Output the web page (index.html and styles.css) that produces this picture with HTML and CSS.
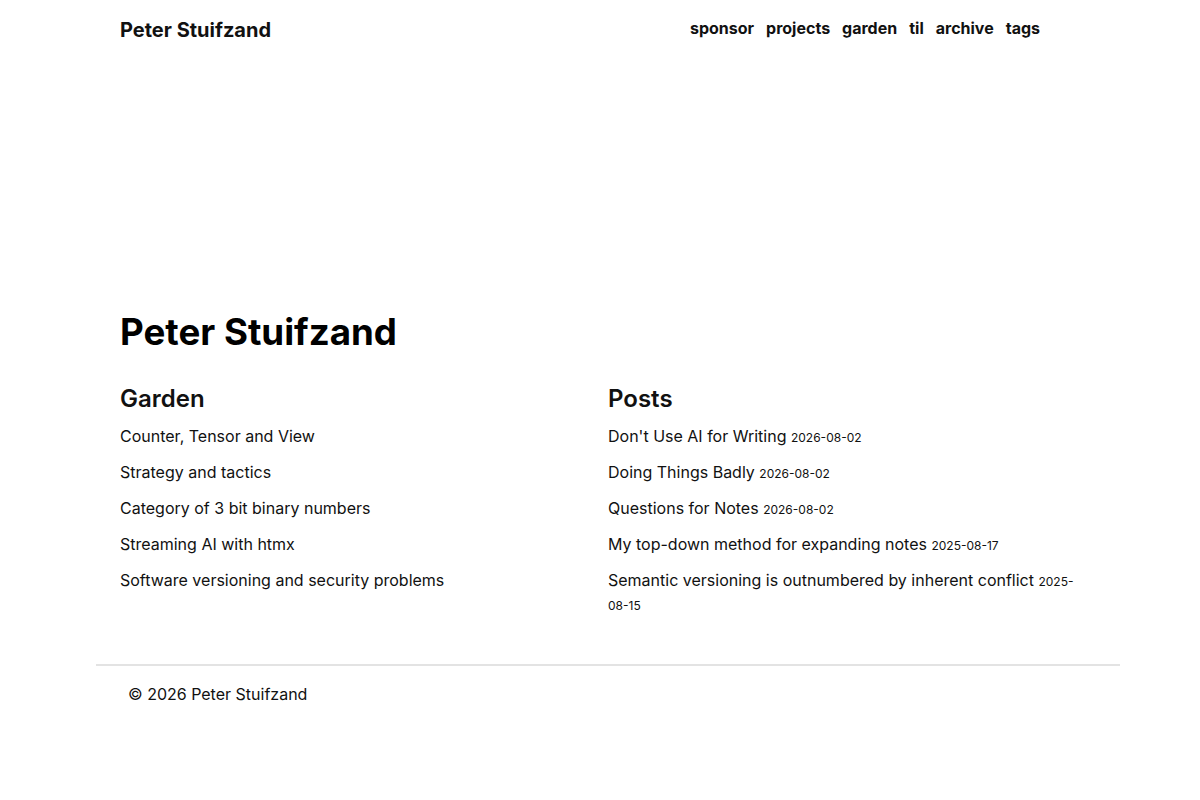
FILE: index.html
```html
<!DOCTYPE html>
<html lang="en">
<head>
<meta charset="utf-8">
<title>Peter Stuifzand</title>
<link rel="stylesheet" href="styles.css">
</head>
<body>
<header class="site-header">
  <a class="site-title" href="#">Peter Stuifzand</a>
  <nav class="site-nav">
    <a href="#">sponsor</a>
    <a href="#">projects</a>
    <a href="#">garden</a>
    <a href="#">til</a>
    <a href="#">archive</a>
    <a href="#">tags</a>
  </nav>
</header>
<main class="content">
  <h1 class="page-title">Peter Stuifzand</h1>
  <div class="columns">
    <section class="column">
      <h2 class="column-title">Garden</h2>
      <ul class="entries">
        <li><a href="#">Counter, Tensor and View</a></li>
        <li><a href="#">Strategy and tactics</a></li>
        <li><a href="#">Category of 3 bit binary numbers</a></li>
        <li><a href="#">Streaming AI with htmx</a></li>
        <li><a href="#">Software versioning and security problems</a></li>
      </ul>
    </section>
    <section class="column">
      <h2 class="column-title">Posts</h2>
      <ul class="entries">
        <li><a href="#">Don't Use AI for Writing</a> <time class="date">2026-08-02</time></li>
        <li><a href="#">Doing Things Badly</a> <time class="date">2026-08-02</time></li>
        <li><a href="#">Questions for Notes</a> <time class="date">2026-08-02</time></li>
        <li><a href="#">My top-down method for expanding notes</a> <time class="date">2025-08-17</time></li>
        <li><a href="#">Semantic versioning is outnumbered by inherent conflict</a> <time class="date">2025-08-15</time></li>
      </ul>
    </section>
  </div>
</main>
<footer class="site-footer">
  <p class="copyright">© 2026 Peter Stuifzand</p>
</footer>
</body>
</html>
```
FILE: styles.css
```css
* { box-sizing: border-box; }
html, body { margin: 0; padding: 0; }
body {
  font-family: Inter, "Noto Sans", "Liberation Sans", sans-serif;
  font-size: 16px;
  line-height: 24px;
  color: #111;
  background: #fff;
}
a { color: inherit; text-decoration: none; }

.site-header {
  width: 960px;
  margin: 0 auto;
  display: flex;
  justify-content: space-between;
  align-items: flex-start;
  padding-top: 15px;
}
.site-title {
  font-size: 20px;
  line-height: 30px;
  font-weight: 700;
  color: #111;
}
.site-nav {
  display: flex;
  gap: 12px;
  margin-right: 40px;
  margin-top: 1px;
  font-weight: 700;
  font-size: 16px;
  line-height: 24px;
}

.content {
  width: 960px;
  margin: 0 auto;
  padding-top: 265px;
}
.page-title {
  margin: 0;
  font-size: 36.7px;
  line-height: 44px;
  font-weight: 700;
  color: #000;
}
.columns {
  display: grid;
  grid-template-columns: 1fr 1fr;
  gap: 16px;
  margin-top: 29px;
}
.column-title {
  margin: 0;
  font-size: 24px;
  line-height: 32px;
  font-weight: 600;
  color: #111;
}
.entries {
  list-style: none;
  margin: 9px 0 0;
  padding: 0;
  display: flex;
  flex-direction: column;
  gap: 12px;
}
.date {
  font-size: 12px;
  line-height: 1;
}

.site-footer {
  width: 1024px;
  margin-left: 96px;
  margin-top: 48px;
  border-top: 2px solid #e3e3e3;
  padding: 16px 32px;
}
.copyright {
  margin: 0;
}
```
